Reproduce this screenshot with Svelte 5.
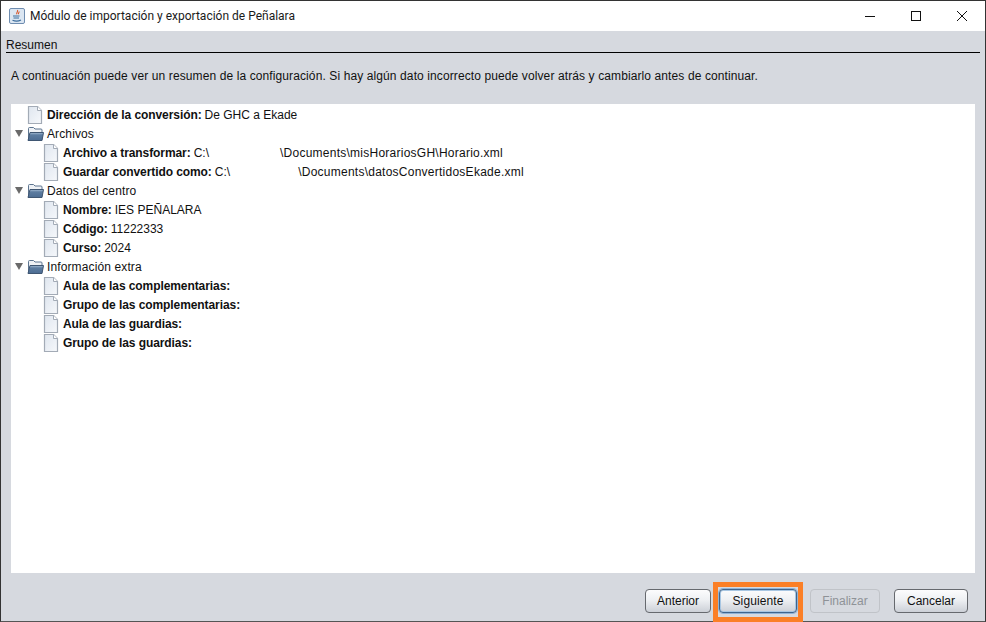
<script>
  const rows = [
    { level: 0, icon: "file", label: "Dirección de la conversión:", value: "De GHC a Ekade" },
    { level: 0, icon: "folder", text: "Archivos" },
    { level: 1, icon: "file", label: "Archivo a transformar:", pre: "C:\\", gap: 71, value: "\\Documents\\misHorariosGH\\Horario.xml" },
    { level: 1, icon: "file", label: "Guardar convertido como:", pre: "C:\\", gap: 68, value: "\\Documents\\datosConvertidosEkade.xml" },
    { level: 0, icon: "folder", text: "Datos del centro" },
    { level: 1, icon: "file", label: "Nombre:", value: "IES PEÑALARA" },
    { level: 1, icon: "file", label: "Código:", value: "11222333" },
    { level: 1, icon: "file", label: "Curso:", value: "2024" },
    { level: 0, icon: "folder", text: "Información extra" },
    { level: 1, icon: "file", label: "Aula de las complementarias:" },
    { level: 1, icon: "file", label: "Grupo de las complementarias:" },
    { level: 1, icon: "file", label: "Aula de las guardias:" },
    { level: 1, icon: "file", label: "Grupo de las guardias:" },
  ];
</script>

<div class="window">
  <header class="titlebar">
    <svg class="app-icon" width="16" height="16" viewBox="0 0 16 16">
      <rect x="0.5" y="0.5" width="15" height="15" rx="1.5" fill="#dbe6f2" stroke="#6f8db0" />
      <path d="M8.500 2c1 1.500-1.500 2.500-.7 4.200M10 3.500c.5 1-1 1.600-.5 2.700" fill="none" stroke="#d8562a" stroke-width="1.1" />
      <path d="M4 8h6.500M4.500 10h5.500M3.500 12.300c2.500 1 6 1 8.500-.3" fill="none" stroke="#3d6e9e" stroke-width="1.1" />
    </svg>
    <span class="title">Módulo de importación y exportación de Peñalara</span>
    <div class="win-controls">
      <svg width="46" height="30" viewBox="0 0 46 30"><path d="M18 15.500h10" stroke="#111" /></svg>
      <svg width="46" height="30" viewBox="0 0 46 30"><rect x="18.500" y="10.500" width="9" height="9" fill="none" stroke="#111" /></svg>
      <svg width="46" height="30" viewBox="0 0 46 30"><path d="M18 10l10 10M28 10l-10 10" stroke="#111" /></svg>
    </div>
  </header>

  <main class="content">
    <div class="section-title">Resumen</div>
    <p class="intro">A continuación puede ver un resumen de la configuración. Si hay algún dato incorrecto puede volver atrás y cambiarlo antes de continuar.</p>

    <div class="tree">
      {#each rows as row}
        <div class="row" class:nested={row.level === 1}>
          {#if row.icon === "folder"}
            <svg class="caret" width="8" height="8" viewBox="0 0 8 8"><path d="M0 1h8L4 8z" fill="#6a6a6a" /></svg>
            <svg class="icon" width="17" height="16" viewBox="0 0 17 16">
              <defs>
                <linearGradient id="fold" x1="0" y1="0" x2="0" y2="1">
                  <stop offset="0" stop-color="#a9c0d8" />
                  <stop offset="0.3" stop-color="#5c7ca0" />
                  <stop offset="1" stop-color="#4c6c92" />
                </linearGradient>
              </defs>
              <path d="M1.500 14V2.500q0-1 1-1h4l1.500 1.500h6q1 0 1 1v2" fill="#eef1f5" stroke="#5d7590" />
              <path d="M1 14.500 3 6.500h13.500l-1.500 8z" fill="url(#fold)" stroke="#3f5672" />
            </svg>
          {:else}
            <svg class="icon" width="17" height="18" viewBox="0 0 17 18">
              <defs>
                <linearGradient id="page" x1="0" y1="0" x2="1" y2="1">
                  <stop offset="0" stop-color="#dfe6ef" />
                  <stop offset="1" stop-color="#f6f8fb" />
                </linearGradient>
              </defs>
              <path d="M1.500 0.500h9l4 4v13h-13z" fill="url(#page)" stroke="#a3abb6" stroke-width="1.2" />
              <path d="M10.500 0.500v4h4" fill="#fff" stroke="#a3abb6" />
            </svg>
          {/if}
          <span class="row-text">
            {#if row.text}{row.text}{:else}<b>{row.label}</b>{#if row.pre}<span class="value">{row.pre}</span><span class="redacted" style="width:{row.gap}px"></span><span class="path">{row.value}</span>{:else if row.value}<span class="value">{row.value}</span>{/if}{/if}
          </span>
        </div>
      {/each}
    </div>

    <footer class="buttons">
      <button class="anterior">Anterior</button>
      <button class="siguiente">Siguiente</button>
      <button class="finalizar" disabled>Finalizar</button>
      <button class="cancelar">Cancelar</button>
    </footer>
  </main>

  <div class="highlight"></div>
</div>

<style>
  :global(body) {
    margin: 0;
    overflow: hidden;
  }

  .window {
    position: relative;
    box-sizing: border-box;
    width: 986px;
    height: 622px;
    display: flex;
    flex-direction: column;
    border: 1px solid #333;
    border-bottom-color: #555;
    background: #d6d9df;
    font-family: "Liberation Sans", Arial, sans-serif;
    font-size: 12px;
    color: #111;
  }

  .titlebar {
    flex: none;
    height: 30px;
    display: flex;
    align-items: center;
    background: #fff;
    padding-left: 8px;
  }

  .app-icon {
    margin-right: 5px;
  }

  .title {
    font-family: Roboto, sans-serif;
    font-size: 12px;
    color: #1a1a1a;
  }

  .win-controls {
    display: flex;
    margin-left: auto;
  }

  .win-controls svg {
    display: block;
  }

  .content {
    flex: 1;
    min-height: 0;
    display: flex;
    flex-direction: column;
    padding: 0 5px;
  }

  .section-title {
    box-sizing: border-box;
    height: 22px;
    width: 974px;
    padding-top: 7px;
    line-height: 14px;
    border-bottom: 1px solid #000;
  }

  .intro {
    margin: 16px 0 0 5px;
    height: 14px;
    line-height: 14px;
    letter-spacing: 0.107px;
  }

  .tree {
    margin: 21px 0 0 5px;
    width: 964px;
    height: 469px;
    flex: none;
    background: #fff;
    padding-top: 1px;
    box-sizing: border-box;
  }

  .row {
    height: 19px;
    display: flex;
    align-items: center;
    position: relative;
    padding-left: 16px;
  }

  .row.nested {
    padding-left: 32px;
  }

  .caret {
    position: absolute;
    left: 4px;
    top: 5px;
  }

  .icon {
    flex: none;
    margin-right: 3px;
  }

  .row-text {
    white-space: nowrap;
    line-height: 14px;
    letter-spacing: 0.12px;
  }

  .row-text b {
    letter-spacing: -0.08px;
  }

  .value {
    margin-left: 3px;
    letter-spacing: 0;
  }

  .path {
    letter-spacing: 0.25px;
  }

  .redacted {
    display: inline-block;
  }

  .buttons {
    display: flex;
    padding: 16px 0 0 639px;
  }

  button {
    box-sizing: border-box;
    height: 24px;
    padding: 0;
    border: 1px solid #66696e;
    border-radius: 4px;
    background: linear-gradient(#fcfcfd, #eef0f3 45%, #ccd0d7);
    font: inherit;
    color: #111;
  }

  .anterior { width: 66px; margin-right: 8px; }

  .siguiente {
    width: 78px;
    margin-right: 13px;
    border-color: #3f648c;
    box-shadow: 0 0 0 1px #8fb3d6, inset 0 0 0 1px #a8c6e2;
    letter-spacing: 0.1px;
  }

  .finalizar {
    width: 70px;
    margin-right: 14px;
    color: #8e9297;
    border-color: #c0c3c8;
    background: #d6d9df;
  }

  .cancelar { width: 74px; }

  .highlight {
    position: absolute;
    left: 712px;
    top: 581px;
    width: 90px;
    height: 40px;
    box-sizing: border-box;
    border: 5px solid #fb7f26;
    pointer-events: none;
  }
</style>
